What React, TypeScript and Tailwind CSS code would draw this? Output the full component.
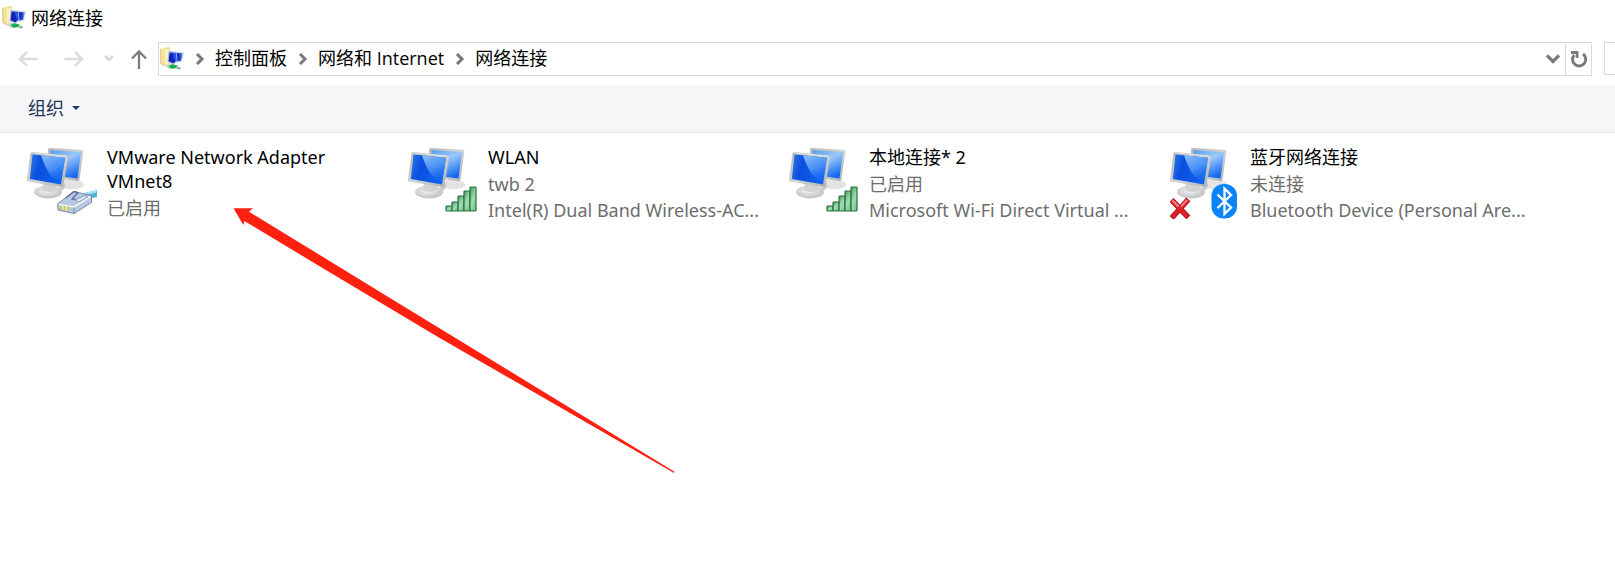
import type { ReactNode } from 'react';

function FolderNetworkIcon() {
  return (
    <svg viewBox="0 0 24 24" className="size-6 shrink-0" aria-hidden="true">
      <defs>
        <linearGradient id="folder" x1="0" y1="0" x2="1" y2="0">
          <stop offset="0" stopColor="#f6e7a4" />
          <stop offset="1" stopColor="#ecd580" />
        </linearGradient>
        <linearGradient id="miniScreen" x1="0" y1="0" x2="1" y2="0">
          <stop offset="0" stopColor="#0a1fa8" />
          <stop offset="0.6" stopColor="#1c3fe0" />
          <stop offset="1" stopColor="#7aaaf5" />
        </linearGradient>
      </defs>
      <path d="M0.500 2 8 0l2.500 1v15L6 19l-5-2.500z" fill="url(#folder)" />
      <path d="M4.500 3 10 1.500v14L5 19.500z" fill="#faf1c2" />
      <path d="M0.800 2v14.600L5 19" fill="none" stroke="#d9bd63" strokeWidth="0.900" />
      <path d="M15 4.500 24 5.200l-2 9.300-5.500 1.500z" fill="#c9d9ee" />
      <path d="M16 6l6.800.3-1.600 7.200-4.200 1z" fill="url(#miniScreen)" />
      <path d="m8.500 4 8 .8 1.200 9.400-4.200 3.300L7.500 15z" fill="#a9bddd" />
      <path d="m9.600 5.500 6 .6 1 7.500-3.400 2.600-4.600-2z" fill="#1025b5" />
      <path d="m12.500 6 3 .3 1 7-1.500 1z" fill="#2c55e8" />
      <path d="m4.500 18 5-1 8 1 4 3-2.500.8-5-1-5 1.200z" fill="#c5d6cd" />
      <path d="m8.500 19 4-1.800 4.500 1.300-.5 2.500-5 .8z" fill="#12b04c" />
      <path d="m17.500 20.500 3.500.5-1.500 1.500-3-.8z" fill="#8b9a9d" />
    </svg>
  );
}

function BackArrow() {
  return (
    <svg viewBox="0 0 20 20" className="size-5" fill="none" stroke="#dcdcdc" strokeWidth="2.500" aria-hidden="true">
      <path d="M19.500 10H2M9 3l-7 7 7 7" />
    </svg>
  );
}

function ForwardArrow() {
  return (
    <svg viewBox="0 0 20 20" className="size-5" fill="none" stroke="#dcdcdc" strokeWidth="2.500" aria-hidden="true">
      <path d="M.5 10H18M11 3l7 7-7 7" />
    </svg>
  );
}

function UpArrow() {
  return (
    <svg viewBox="0 0 20 20" className="size-5" fill="none" stroke="#7d7d7d" strokeWidth="2.300" aria-hidden="true">
      <path d="M10 20V2.500M3 9.500l7-7 7 7" />
    </svg>
  );
}

function CrumbChevron() {
  return (
    <svg viewBox="0 0 10 12" className="h-3 w-[10px] shrink-0" fill="none" stroke="#7a7a7a" strokeWidth="3" aria-hidden="true">
      <path d="m2 1 5 5-5 5" />
    </svg>
  );
}

function Monitors() {
  return (
    <>
      <defs>
        <linearGradient id="screen" x1="0" y1="0" x2="1" y2="0.25">
          <stop offset="0" stopColor="#2f7bea" />
          <stop offset="0.35" stopColor="#0a4fdd" />
          <stop offset="1" stopColor="#0f63f2" />
        </linearGradient>
        <linearGradient id="glare" x1="0.2" y1="0" x2="0.6" y2="1">
          <stop offset="0" stopColor="#8dc0fb" stopOpacity="0.95" />
          <stop offset="0.5" stopColor="#64a6fb" stopOpacity="0.7" />
          <stop offset="1" stopColor="#2277fa" stopOpacity="0.1" />
        </linearGradient>
        <linearGradient id="backScreen" x1="0.1" y1="0" x2="0.6" y2="1">
          <stop offset="0" stopColor="#5a9fee" />
          <stop offset="0.4" stopColor="#9cc9fa" />
          <stop offset="1" stopColor="#1468f0" />
        </linearGradient>
        <linearGradient id="frame" x1="0" y1="0" x2="1" y2="1">
          <stop offset="0" stopColor="#b4b7b8" />
          <stop offset="0.5" stopColor="#d2d4d5" />
          <stop offset="1" stopColor="#adb0b1" />
        </linearGradient>
        <radialGradient id="stand" cx="0.45" cy="0.4" r="0.6">
          <stop offset="0" stopColor="#f4f4f4" />
          <stop offset="1" stopColor="#c0c0c0" />
        </radialGradient>
      </defs>
      <ellipse cx="45" cy="37.500" rx="12" ry="5" fill="#dcdcdc" opacity="0.8" />
      <path d="M21 2.500Q21 1 23 1l31.500 1.800q2 .2 1.800 2L52.500 32.500q-.3 2-2.500 1.600L22 30z" fill="url(#frame)" />
      <path d="m23.500 3.300 30.500 1.800-3.500 26.400-26-3.500z" fill="url(#backScreen)" />
      <ellipse cx="21" cy="45" rx="14" ry="6.500" fill="url(#stand)" />
      <path d="M16 36h12l1 7q-7 4-14 0z" fill="#d2d2d2" />
      <path d="M36 35q4 2 1 7-4 4-8 5 5-5 3-11z" fill="#cbcbcb" />
      <path d="M3.500 6.500Q3.700 5 5 5L39 8.500q2.300.3 2 2.500L36.500 38.800q-.4 1.800-2 1.500L1 34.500Q-.300 34 0 32z" fill="url(#frame)" />
      <path d="M4.500 5.800 39 9.300" fill="none" stroke="#e6e8e8" strokeWidth="0.800" />
      <path d="m5.500 7.500 32.500 3.200-4 26.800L2.800 32z" fill="url(#screen)" />
      <path d="m14 8.300 24 2.400-3.800 25Q27 33 22 26q-4.500-7-8-17.700z" fill="url(#glare)" />
    </>
  );
}

function EthernetBadge() {
  return (
    <g>
      <path d="m54 47 16-4v7l-12 2.500z" fill="#4fb0dc" />
      <path d="m56 46.500 13.500-3.500v2.500l-11 3z" fill="#a6def3" />
      <path d="m30.500 57 16-12.500 18 4v7L47 66.500l-16-3.500z" fill="#b7c8e2" stroke="#7789b0" strokeWidth="1" />
      <path d="m32 57.500 15 2.500L63.500 49.500" fill="none" stroke="#f3f7fc" strokeWidth="1.500" />
      <path d="M47 60.500v5.500" stroke="#7789b0" strokeWidth="1" />
      <path d="m39 51 8-6.500 4 1-6 6.500 9 1.500" fill="none" stroke="#5c7099" strokeWidth="1.300" />
      <path d="m48 53 10-4.500 2.500 1.500-9 5z" fill="#e6eef9" stroke="#7789b0" strokeWidth="0.800" />
      <path d="M34 58.500v4.500M37.500 59v4.500M41 59.500V64" stroke="#cdc84e" strokeWidth="2" />
      <path d="M35.800 58.500V63M39.300 59v4.500" stroke="#fbfbe4" strokeWidth="1" />
    </g>
  );
}

const SIGNAL_BARS = [
  { x: 38, h: 5 },
  { x: 44, h: 9 },
  { x: 50, h: 15 },
  { x: 56, h: 20 },
  { x: 62, h: 24 },
];

function SignalBadge() {
  return (
    <g>
      <defs>
        <linearGradient id="bar" x1="0" y1="0" x2="0.6" y2="1">
          <stop offset="0" stopColor="#459a62" />
          <stop offset="0.6" stopColor="#a3dcb3" />
          <stop offset="1" stopColor="#7ec795" />
        </linearGradient>
      </defs>
      {SIGNAL_BARS.map((bar) => (
        <rect
          key={bar.x}
          x={bar.x}
          y={64 - bar.h}
          width="6"
          height={bar.h}
          rx="0.8"
          fill="url(#bar)"
          stroke="#23723f"
          strokeWidth="1.2"
        />
      ))}
    </g>
  );
}

function BluetoothBadge() {
  return (
    <g>
      <rect x="41.500" y="37" width="25.500" height="34.500" rx="12" fill="#0a84f8" />
      <path d="m47.500 47.500 13.500 13-6.500 6.500V41.500L61 48 47.500 61" fill="none" stroke="#fff" strokeWidth="2.300" />
    </g>
  );
}

function DisconnectedBadge() {
  return (
    <g fill="none" strokeLinecap="square">
      <path d="m3.500 55 13 13.500M16.500 54.500l-13 14.500" stroke="#b5121b" strokeWidth="5.500" />
      <path d="m3.500 55 13 13.500M16.500 54.500l-13 14.500" stroke="#dd2129" strokeWidth="3.800" />
      <path d="m3 54 5 5M16.500 53.500l-5 5.500" stroke="#f58a8c" strokeWidth="1.800" />
    </g>
  );
}

type Connection = {
  name: string;
  details: string[];
  badge: ReactNode;
};

const CONNECTIONS: Connection[] = [
  { name: 'VMware Network Adapter VMnet8', details: ['已启用'], badge: <EthernetBadge /> },
  { name: 'WLAN', details: ['twb 2', 'Intel(R) Dual Band Wireless-AC...'], badge: <SignalBadge /> },
  { name: '本地连接* 2', details: ['已启用', 'Microsoft Wi-Fi Direct Virtual ...'], badge: <SignalBadge /> },
  {
    name: '蓝牙网络连接',
    details: ['未连接', 'Bluetooth Device (Personal Are...'],
    badge: (
      <>
        <BluetoothBadge />
        <DisconnectedBadge />
      </>
    ),
  },
];

function ConnectionItem({ name, details, badge }: Connection) {
  return (
    <li className="flex w-[381px] shrink-0 items-start gap-2">
      <svg viewBox="0 0 72 72" className="mt-0.5 size-[72px] shrink-0" aria-hidden="true">
        <Monitors />
        {badge}
      </svg>
      <div className="min-w-0 pr-10">
        <h2 className="pb-px leading-6">{name}</h2>
        {details.map((line) => (
          <p key={line} className="mt-0.5 whitespace-nowrap leading-6 text-[#6d6d6d]">
            {line}
          </p>
        ))}
      </div>
    </li>
  );
}

function PointerArrow() {
  return (
    <svg
      viewBox="0 0 442 266"
      className="pointer-events-none absolute left-[233px] top-[208px] h-[266px] w-[442px]"
      aria-hidden="true"
    >
      <path d="M.5.300H20L16 3.700 159 91.200 441.500 263.800 441 265 205 129 92 61.500 11.500 13 10.300 17z" fill="#ff2010" />
    </svg>
  );
}

const CRUMBS = ['控制面板', '网络和 Internet', '网络连接'];

export default function App() {
  return (
    <div className="relative min-h-screen overflow-hidden bg-white font-['Open_Sans','Noto_Sans_CJK_SC',sans-serif] text-[18px] font-normal text-black">
      <header className="flex h-[35px] items-center gap-[5px] pl-0.5">
        <FolderNetworkIcon />
        <h1 className="leading-6">网络连接</h1>
      </header>

      <nav className="flex items-start pb-[9px] pt-[7px]" aria-label="导航">
        <div className="flex h-[34px] w-[158px] shrink-0 items-center pl-[18px]">
          <button type="button" aria-label="后退">
            <BackArrow />
          </button>
          <button type="button" aria-label="前进" className="ml-[26px]">
            <ForwardArrow />
          </button>
          <button type="button" aria-label="最近位置" className="ml-5">
            <svg viewBox="0 0 10 8" className="h-2 w-[10px]" fill="none" stroke="#d9d9d9" strokeWidth="2.500" aria-hidden="true">
              <path d="m1 1 4 4 4-4" />
            </svg>
          </button>
          <button type="button" aria-label="向上" className="ml-[15px]">
            <UpArrow />
          </button>
        </div>
        <div className="flex h-[34px] min-w-0 grow items-center border border-[#d9d9d9]">
          <span className="pl-px">
            <FolderNetworkIcon />
          </span>
          <ol className="flex grow items-center">
            {CRUMBS.map((crumb) => (
              <li key={crumb} className="flex items-center">
                <span className="flex w-[31px] justify-center">
                  <CrumbChevron />
                </span>
                <a href="#" className="pb-0.5 leading-6">
                  {crumb}
                </a>
              </li>
            ))}
          </ol>
          <button type="button" aria-label="以前的位置" className="flex w-6 justify-center">
            <svg viewBox="0 0 14 10" className="h-[10px] w-[14px]" fill="none" stroke="#7a7a7a" strokeWidth="3.200" aria-hidden="true">
              <path d="m1 1.500 6 6 6-6" />
            </svg>
          </button>
          <button type="button" aria-label="刷新" className="flex h-full w-[26px] items-center justify-center border-l border-[#d9d9d9]">
            <svg viewBox="0 0 18 18" className="size-[18px]" aria-hidden="true">
              <path d="M13 4A6.600 6.600 0 1 1 4.200 5" fill="none" stroke="#7a7a7a" strokeWidth="3" />
              <path d="M1 1h7.500v7H5.700V4H1z" fill="#7a7a7a" />
            </svg>
          </button>
        </div>
        <input
          type="search"
          aria-label="搜索"
          className="ml-3 h-[33px] w-[11px] shrink-0 border border-r-0 border-[#d9d9d9] outline-none"
        />
      </nav>

      <div className="flex h-12 items-center border-b border-[#e5e7ea] bg-[#f4f6f8] pb-0.5 pl-7">
        <button type="button" className="flex items-center gap-2 leading-6 text-[#1f3355]">
          组织
          <svg viewBox="0 0 8 4" className="h-1 w-2" fill="#1f3a66" aria-hidden="true">
            <path d="M0 0h8L4 4z" />
          </svg>
        </button>
      </div>

      <main>
        <ul className="flex pl-[27px] pt-3 font-['Noto_Sans','Noto_Sans_CJK_SC',sans-serif]">
          {CONNECTIONS.map((connection) => (
            <ConnectionItem key={connection.name} {...connection} />
          ))}
        </ul>
      </main>

      <PointerArrow />
    </div>
  );
}
